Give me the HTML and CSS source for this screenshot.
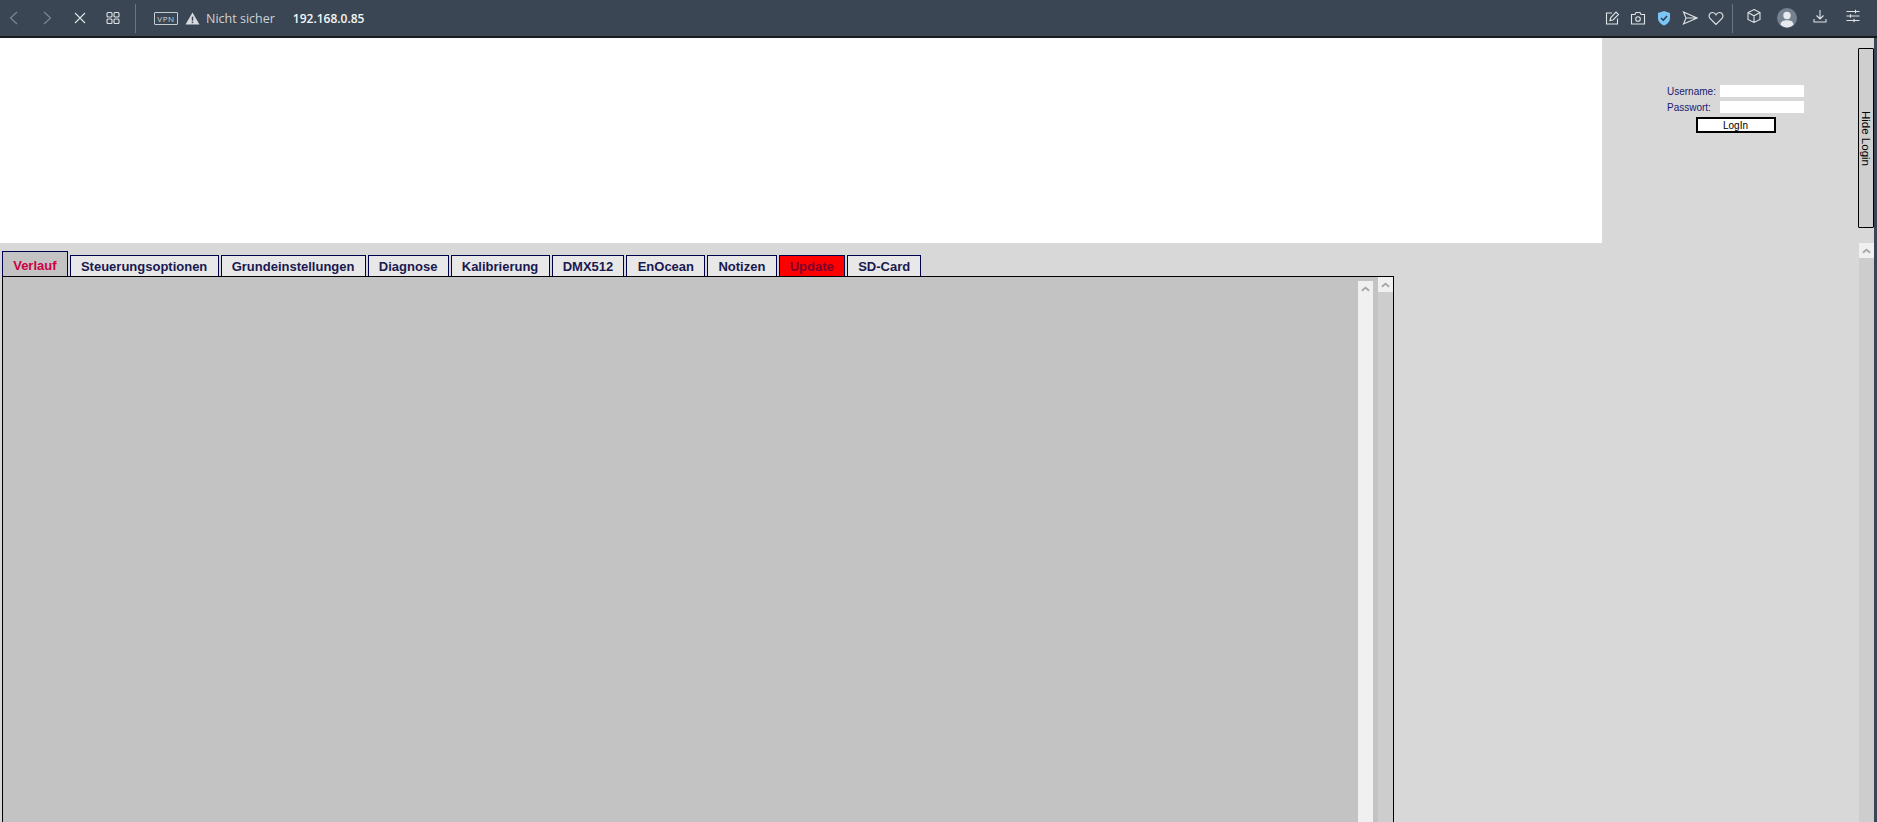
FILE: index.html
```html
<!DOCTYPE html>
<html lang="de">
<head>
  <meta charset="UTF-8">
  <title>192.168.0.85</title>
  <link rel="stylesheet" href="styles.css">
</head>
<body>

  <!-- browser toolbar -->
  <div class="toolbar">
    <div class="nav-icons">
      <svg class="icon dim" viewBox="0 0 16 16"><path d="M11 2 L4.5 8 L11 14"/></svg>
      <svg class="icon dim" viewBox="0 0 16 16"><path d="M5 2 L11.5 8 L5 14"/></svg>
      <svg class="icon" viewBox="0 0 16 16"><path d="M3 3 L13 13 M13 3 L3 13"/></svg>
      <svg class="icon" viewBox="0 0 16 16"><rect x="2" y="2.5" width="5" height="4.5" rx="1"/><rect x="9" y="2.5" width="5" height="4.5" rx="1"/><rect x="2" y="9" width="5" height="4.5" rx="1"/><rect x="9" y="9" width="5" height="4.5" rx="1"/></svg>
    </div>
    <div class="sep"></div>
    <span class="vpn">VPN</span>
    <svg class="warn" viewBox="0 0 16 14"><path d="M8 0.5 L15.5 13.5 L0.5 13.5 Z"/><rect class="warn-mark" x="7.2" y="5" width="1.6" height="4.5"/><rect class="warn-mark" x="7.2" y="10.4" width="1.6" height="1.6"/></svg>
    <span class="not-secure">Nicht sicher</span>
    <span class="address">192.168.0.85</span>

    <div class="tool-icons">
      <span class="slot"><svg class="icon" viewBox="0 0 16 16"><path d="M8 3 H2.5 V14 H13.5 V8.5 M6 10.5 L6.8 7.5 L12 2 L14.5 4.5 L9 10 Z"/></svg></span>
      <span class="slot"><svg class="icon" viewBox="0 0 16 16"><path d="M1.5 4.5 H5 L6 2.5 H10 L11 4.5 H14.5 V14 H1.5 Z"/><circle cx="8" cy="9" r="2.3"/></svg></span>
      <span class="slot"><svg class="shield" viewBox="0 0 16 16"><path d="M8 1 L14 3 V8 C14 11.5 11.5 14 8 15.5 C4.5 14 2 11.5 2 8 V3 Z"/><path class="tick" d="M5 8 L7.3 10.2 L11 6"/></svg></span>
      <span class="slot"><svg class="icon" viewBox="0 0 16 16"><path d="M1.5 2 L15 8 L1.5 14 L4 8 Z M4 8 H15"/></svg></span>
      <span class="slot"><svg class="icon" viewBox="0 0 16 16"><path d="M8 14.5 L2 8.5 C0 6 1.5 2.5 4.5 2.5 C6 2.5 7.3 3.3 8 4.7 C8.7 3.3 10 2.5 11.5 2.5 C14.5 2.5 16 6 14 8.5 Z"/></svg></span>
    </div>
    <div class="sep sep-right"></div>
    <div class="user-icons">
      <span class="slot"><svg class="icon" viewBox="0 0 16 16"><path d="M8 1.5 L14 4.5 V11.5 L8 14.5 L2 11.5 V4.5 Z M2 4.5 L8 7.8 L14 4.5 M8 7.8 V14.5"/></svg></span>
      <span class="slot"><svg class="avatar" viewBox="0 0 20 20"><circle class="avatar-bg" cx="10" cy="10" r="10"/><circle class="avatar-fg" cx="10" cy="7.5" r="3.7"/><path class="avatar-fg" d="M3.5 16.5 C4 13 7 12.3 10 12.3 C13 12.3 16 13 16.5 16.5 C14.5 18.8 12 19.5 10 19.5 C8 19.5 5.5 18.8 3.5 16.5 Z"/></svg></span>
      <span class="slot"><svg class="icon" viewBox="0 0 16 16"><path d="M8 2 V10.5 M4.5 7.5 L8 11 L11.5 7.5 M2 11 V14 H14 V11"/></svg></span>
      <span class="slot"><svg class="icon" viewBox="0 0 16 16"><path d="M1.5 3.5 H14.5 M1.5 8 H14.5 M1.5 12.5 H14.5 M10.5 1.8 V5.2 M5.5 6.3 V9.7 M9 10.8 V14.2"/></svg></span>
    </div>
  </div>

  <div class="window">
    <div class="page">

      <!-- kopf -->
      <div class="head">
        <div class="head-blank"></div>
        <div class="login-area">
          <div class="login-form">
            <label>Username:</label>
            <input type="text">
            <label>Passwort:</label>
            <input type="password">
            <button class="login-btn">LogIn</button>
          </div>
          <div class="hide-login">Hide Login</div>
        </div>
      </div>

      <!-- inhalt -->
      <div class="content">
        <div class="main">
          <ul class="tabs">
            <li class="tab current">Verlauf</li>
            <li class="tab">Steuerungsoptionen</li>
            <li class="tab">Grundeinstellungen</li>
            <li class="tab">Diagnose</li>
            <li class="tab">Kalibrierung</li>
            <li class="tab">DMX512</li>
            <li class="tab">EnOcean</li>
            <li class="tab">Notizen</li>
            <li class="tab update">Update</li>
            <li class="tab">SD-Card</li>
          </ul>
          <div class="tab-panel">
            <div class="tab-body"></div>
            <div class="inner-scroll">
              <div class="scroll-btn"><svg viewBox="0 0 10 6"><path d="M1 5 L5 1.5 L9 5"/></svg></div>
            </div>
            <div class="outer-scroll">
              <div class="scroll-btn"><svg viewBox="0 0 10 6"><path d="M1 5 L5 1.5 L9 5"/></svg></div>
            </div>
          </div>
        </div>
        <div class="page-scroll">
          <div class="scroll-btn"><svg viewBox="0 0 10 6"><path d="M1 5 L5 1.5 L9 5"/></svg></div>
        </div>
      </div>

    </div>
    <div class="window-edge"></div>
  </div>

</body>
</html>
```

FILE: styles.css
```css
* {
  margin: 0; padding: 0; box-sizing: border-box;
}

html, body {
  width: 100%; height: 100%;
  overflow: hidden;
  font-family: "Liberation Sans", Arial, sans-serif;
  background: #d8d8d8;
}

/* browser toolbar */
.toolbar {
  display: flex;
  align-items: center;
  height: 38px;
  background: #3a4653;
  border-bottom: 2px solid #161b20;
  color: #d5d9dd;
  font-family: "Open Sans", sans-serif;
}

.icon {
  display: block;
  width: 16px;
  height: 16px;
  fill: none;
  stroke: #dfe3e6;
  stroke-width: 1.1;
}

.icon.dim {
  stroke: #7f8994;
}

.nav-icons {
  display: flex;
  gap: 17px;
  padding-left: 6px;
}

.sep {
  width: 1px;
  height: 29px;
  margin: 0 18px 0 14px;
  background: #6a7580;
}

.vpn {
  width: 24px;
  height: 13px;
  border: 1px solid #c6ccd2;
  border-radius: 1px;
  font-size: 8px;
  line-height: 11px;
  letter-spacing: 0.6px;
  text-align: center;
  color: #d0d5da;
}

.warn {
  width: 15px;
  height: 13px;
  margin-left: 7px;
  fill: #d9dcdf;
}

.warn-mark {
  fill: #3a4653;
}

.not-secure {
  margin-left: 6px;
  font-size: 12.5px;
  color: #cfd3d7;
}

.address {
  margin-left: 18px;
  font-size: 12px;
  font-weight: 600;
  color: #f4f5f6;
}

.tool-icons {
  display: flex;
  margin-left: auto;
}

.tool-icons .slot {
  width: 26px;
}

.user-icons {
  display: flex;
  padding-right: 8px;
}

.user-icons .slot {
  width: 33px;
}

.slot {
  display: flex;
  justify-content: center;
}

.sep-right {
  margin: 0 4px 0 3px;
}

.shield {
  width: 16px;
  height: 16px;
  fill: #7cc5f7;
}

.tick {
  fill: none;
  stroke: #2c3a48;
  stroke-width: 1.5;
}

.avatar {
  width: 20px;
  height: 20px;
}

.avatar-bg {
  fill: #75828f;
}

.avatar-fg {
  fill: #e6eaee;
}

/* seite */
.window {
  display: flex;
  height: 784px;
}

.page {
  flex: 1;
  min-width: 0;
}

.window-edge {
  width: 3px;
  background: #3a4653;
}

.head {
  display: flex;
  height: 205px;
}

.head-blank {
  flex: 1;
  background: #fff;
}

.login-area {
  display: flex;
  justify-content: space-between;
  width: 272px;
  padding: 10px 0 0 65px;
  background: #d8d8d8;
}

.login-form {
  display: grid;
  grid-template-columns: 53px 84px;
  grid-auto-rows: 12px;
  row-gap: 4px;
  align-content: start;
  margin-top: 37px;
  font-size: 10px;
  color: #191970;
}

.login-form label {
  padding-top: 1px;
  line-height: 12px;
}

.login-form input {
  width: 84px;
  height: 12px;
  border: none;
  background: #fff;
}

.login-btn {
  grid-column: 1 / 3;
  justify-self: center;
  width: 80px;
  height: 16px;
  border: 2px solid #000;
  background: #fff;
  color: #000;
  font: 10px "Liberation Sans", Arial, sans-serif;
}

.hide-login {
  width: 16px;
  height: 180px;
  border: 1px solid #000;
  border-radius: 1px;
  background: #cfcfcf;
  writing-mode: vertical-rl;
  text-align: center;
  font-size: 11.5px;
  line-height: 14px;
  color: #000;
}

.content {
  display: flex;
  justify-content: space-between;
  height: 579px;
}

.main {
  width: 1394px;
  padding: 8px 0 0 2px;
}

.tabs {
  display: flex;
  align-items: flex-end;
  gap: 2px;
  height: 25px;
  list-style: none;
}

.tab {
  height: 21px;
  padding: 0 10.2px;
  border: 1px solid #000050;
  border-bottom: none;
  background: #e8e8e8;
  font-size: 13px;
  font-weight: bold;
  line-height: 21px;
  color: #191950;
}

.tab.current {
  height: 25px;
  background: #c3c3c3;
  line-height: 28px;
  color: #cc0044;
}

.tab.update {
  background: #f00;
  color: #7a0030;
}

.tab-panel {
  display: flex;
  height: 546px;
  border: solid #000;
  border-width: 1px 1px 0 1px;
  background: #c3c3c3;
}

.tab-body {
  flex: 1;
}

.inner-scroll {
  width: 15px;
  margin: 4px 5px 0 0;
  background: #f0f0f0;
}

.outer-scroll {
  width: 15px;
  background: #cdcdcd;
}

.page-scroll {
  width: 15px;
  background: #cdcdcd;
}

.scroll-btn {
  display: flex;
  justify-content: center;
  align-items: center;
  height: 15px;
  background: #f0f0f0;
}

.scroll-btn svg {
  width: 9px;
  height: 6px;
  fill: none;
  stroke: #a6a6a6;
  stroke-width: 2;
}
```
